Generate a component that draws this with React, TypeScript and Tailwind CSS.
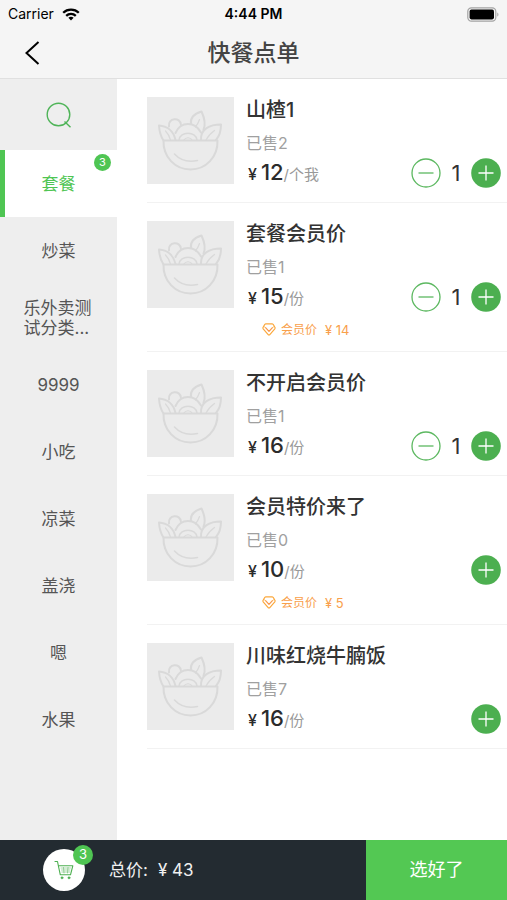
import { useState } from "react";

type Dish = {
  id: number;
  name: string;
  sold: number;
  price: number;
  unit: string;
  memberPrice?: number;
};

const categories = ["套餐", "炒菜", "乐外卖测试分类...", "9999", "小吃", "凉菜", "盖浇", "嗯", "水果"];

const dishes: Dish[] = [
  { id: 1, name: "山楂1", sold: 2, price: 12, unit: "个我" },
  { id: 2, name: "套餐会员价", sold: 1, price: 15, unit: "份", memberPrice: 14 },
  { id: 3, name: "不开启会员价", sold: 1, price: 16, unit: "份" },
  { id: 4, name: "会员特价来了", sold: 0, price: 10, unit: "份", memberPrice: 5 },
  { id: 5, name: "川味红烧牛腩饭", sold: 7, price: 16, unit: "份" },
];

function WifiIcon() {
  return (
    <svg viewBox="0 0 18 13" className="h-[13px] w-[18px]" fill="none" stroke="#000" strokeWidth="2.3" aria-hidden="true">
      <path d="M1.2 4.8C5.5 .6 12.5 .6 16.8 4.8" />
      <path d="M4.2 7.8C6.9 5.2 11.1 5.2 13.8 7.8" />
      <path d="M6.4 9.8C7.9 8.4 10.1 8.4 11.6 9.8L9 12.4Z" fill="#000" stroke="none" />
    </svg>
  );
}

function BatteryIcon() {
  return (
    <svg viewBox="0 0 32 15" className="h-[15px] w-8" fill="none" aria-hidden="true">
      <rect x=".8" y=".8" width="28" height="13.4" rx="3.6" stroke="#a3a3a3" strokeWidth="1.2" />
      <rect x="2.6" y="2.6" width="24.4" height="9.8" rx="1.8" fill="#000" />
      <path d="M30.3 5.4C31.8 6 31.8 9 30.3 9.6Z" fill="#a3a3a3" />
    </svg>
  );
}

function BowlPicture() {
  return (
    <svg viewBox="0 0 87 87" className="size-full" fill="none" stroke="#d9d9d9" strokeWidth="2" strokeLinecap="round" strokeLinejoin="round" aria-hidden="true">
      <path d="M16.500 43.500H70.500C71 60 59 72.500 43.500 72.500S16 60 16.500 43.500Z" />
      <path d="M27.500 57C33 63 41 65.500 50.500 63.500" strokeWidth="1.500" />
      <path d="M16.500 43.500C13.500 39 12.300 34 12 28.500C20 29 26.500 34 28.500 43" />
      <path d="M18.500 34C21 36.500 22.500 39.500 23.500 43" strokeWidth="1.200" />
      <path d="M22 29.500C20.500 20.500 33.500 19.500 34 28" />
      <path d="M28.500 36C31 30 35 27 41 27S51 30 54 35.500" />
      <path d="M32 43C33 34 49 34 50 43" strokeWidth="1.500" />
      <path d="M37 43C38.500 40 43.500 40 45 43" strokeWidth="1.200" />
      <path d="M44 27C43 20.500 48 16.500 54.500 14.500C57.500 21 59 27 56.500 32.500" />
      <path d="M52.500 22.500C51.500 25.500 50 28 48.500 30" strokeWidth="1.200" />
      <path d="M54 43C53.500 32 62.500 27.500 74 27.500C74 34 72.500 39 69 43" />
      <path d="M67.500 33.500C64 36 61 39 59 43" strokeWidth="1.200" />
    </svg>
  );
}

function GemIcon() {
  return (
    <svg viewBox="0 0 14 13" className="mb-0.5 h-[13px] w-[14px]" fill="none" stroke="#fba83c" strokeWidth="1.2" strokeLinejoin="round" strokeLinecap="round" aria-hidden="true">
      <path d="M4 .8H10Q10.800 .8 11.300 1.500L13 4.500Q13.200 5.200 12.800 5.800L7.600 11.800Q7 12.300 6.400 11.800L1.200 5.800Q.8 5.200 1 4.500L2.700 1.500Q3.200 .8 4 .8Z" />
      <path d="M3.800 4.800L7 8.300L10.200 4.800" stroke="#f9964b" />
      <path d="M2 3.600L3.800 4.800M12 3.600L10.200 4.800" strokeWidth=".7" />
    </svg>
  );
}

function CartIcon() {
  return (
    <svg viewBox="0 0 20 20" className="size-5" fill="none" stroke="#4caf50" strokeLinecap="round" strokeLinejoin="round" aria-hidden="true">
      <path d="M1 1.500H3.500L4.300 5.500L6.300 14.800H16.500L18.800 5.800H4.400" strokeWidth="1.100" />
      <path d="M7 8H16.500M7.500 10H16M7.800 12H15.800M9.500 7.500L10 13M14 7.500L13.500 13" strokeWidth=".5" />
      <circle cx="8" cy="17.800" r="1.100" fill="#4caf50" strokeWidth=".5" />
      <circle cx="15" cy="17.800" r="1.100" fill="#4caf50" strokeWidth=".5" />
    </svg>
  );
}

function DishRow({ dish, count, onChange }: { dish: Dish; count: number; onChange: (next: number) => void }) {
  return (
    <li
      className={
        dish.memberPrice !== undefined
          ? "flex border-b border-[#f2f2f2] pt-[18px] pr-1.5 pb-[11px]"
          : "flex border-b border-[#f2f2f2] pt-[18px] pr-1.5 pb-3.5"
      }
    >
      <div className="size-[87px] shrink-0 bg-[#ebebeb]">
        <BowlPicture />
      </div>
      <div className="ml-3 min-w-0 flex-1">
        <h2 className="truncate text-xl leading-[26px] font-medium text-[#333]">{dish.name}</h2>
        <p className="mt-2 text-base leading-6 text-[#a0a0a0]">已售{dish.sold}</p>
        <div className="mt-[3px] flex h-[30px] items-center justify-between">
          <p className="flex items-baseline pl-0.5 leading-7 text-[#2b2b2b]">
            <span className="text-base font-medium">¥</span>
            <span className="ml-1 text-[22px] font-medium">{dish.price}</span>
            <span className="text-[15px] text-[#999]">/{dish.unit}</span>
          </p>
          <div className="flex items-center">
            {count > 0 && (
              <>
                <button type="button" aria-label="减少" onClick={() => onChange(count - 1)} className="size-[30px]">
                  <svg viewBox="0 0 30 30" className="size-full" fill="none" stroke="#5cb860" strokeWidth="1.3" aria-hidden="true">
                    <circle cx="15" cy="15" r="14" />
                    <path d="M7.500 15H22.500" />
                  </svg>
                </button>
                <span className="w-[30px] text-center text-[22px] leading-[30px] text-[#333]">{count}</span>
              </>
            )}
            <button type="button" aria-label="增加" onClick={() => onChange(count + 1)} className="size-[30px]">
              <svg viewBox="0 0 30 30" className="size-full" fill="none" stroke="#fff" strokeWidth="1.3" aria-hidden="true">
                <circle cx="15" cy="15" r="14.800" fill="#4caf50" stroke="none" />
                <path d="M7.500 15H22.500M15 7.500V22.500" />
              </svg>
            </button>
          </div>
        </div>
        {dish.memberPrice !== undefined && (
          <p className="mt-2 flex items-center pl-4 text-xs leading-5 text-[#f9a04b]">
            <GemIcon />
            <span className="ml-[5px]">会员价</span>
            <span className="ml-2 text-[13px]">¥ {dish.memberPrice}</span>
          </p>
        )}
      </div>
    </li>
  );
}

export default function App() {
  const [active, setActive] = useState(0);
  const [counts, setCounts] = useState<Record<number, number>>({ 1: 1, 2: 1, 3: 1 });

  const quantity = dishes.reduce((sum, d) => sum + (counts[d.id] ?? 0), 0);
  const total = dishes.reduce((sum, d) => sum + (counts[d.id] ?? 0) * d.price, 0);

  return (
    <div className="flex h-dvh flex-col bg-white font-['Inter','Noto_Sans_CJK_SC',sans-serif]">
      <header className="border-b border-[#e0e0e0] bg-[#f5f5f5]">
        <div className="grid h-7 grid-cols-3 items-center px-2 text-sm text-black">
          <div className="flex items-center gap-2">
            <span>Carrier</span>
            <WifiIcon />
          </div>
          <time className="text-center font-semibold">4:44 PM</time>
          <div className="flex justify-end">
            <BatteryIcon />
          </div>
        </div>
        <div className="grid h-[50px] grid-cols-[64px_1fr_64px] items-center">
          <button type="button" aria-label="返回" className="flex h-full items-center pl-6">
            <svg viewBox="0 0 16 24" className="h-6 w-4" fill="none" stroke="#000" strokeWidth="2" aria-hidden="true">
              <path d="M14.500 1L2.500 12L14.500 23" />
            </svg>
          </button>
          <h1 className="text-center text-[23px] leading-8 font-medium text-[#444]">快餐点单</h1>
        </div>
      </header>

      <div className="flex min-h-0 flex-1">
        <nav aria-label="分类" className="w-[117px] shrink-0 overflow-y-auto bg-[#eee]">
          <button type="button" aria-label="搜索" className="flex h-[71px] w-full items-center justify-center">
            <svg viewBox="0 0 26 26" className="size-[26px]" fill="none" stroke="#4fb458" strokeWidth="1.4" aria-hidden="true">
              <circle cx="12.500" cy="12.500" r="11.300" />
              <path d="M18.500 19.500L24.500 25.300" />
            </svg>
          </button>
          {categories.map((name, i) => (
            <button
              key={name}
              type="button"
              onClick={() => setActive(i)}
              className={
                i === active
                  ? "relative flex h-[67px] w-full items-center justify-center border-l-[5px] border-[#4fc553] bg-white pr-[5px] text-[#4fc553]"
                  : "relative flex h-[67px] w-full items-center justify-center text-[#555]"
              }
            >
              <span className="max-w-[70px] text-left text-[17px] leading-5 break-all">{name}</span>
              {i === 0 && quantity > 0 && (
                <span className="absolute top-1 right-1.5 flex size-[17px] items-center justify-center rounded-full bg-[#4fc553] text-[11px] text-white">
                  {quantity}
                </span>
              )}
            </button>
          ))}
        </nav>
        <main className="min-w-0 flex-1 overflow-y-auto pl-[30px]">
          <ul>
            {dishes.map((d) => (
              <DishRow
                key={d.id}
                dish={d}
                count={counts[d.id] ?? 0}
                onChange={(next) => setCounts({ ...counts, [d.id]: next })}
              />
            ))}
          </ul>
        </main>
      </div>

      <footer className="flex h-[60px] shrink-0 bg-[#232b31]">
        <div className="flex flex-1 items-center pl-[43px]">
          <button type="button" aria-label="购物车" className="relative flex size-[42px] items-center justify-center rounded-full bg-white">
            <CartIcon />
            <span className="absolute -top-1 -right-2 flex size-5 items-center justify-center rounded-full bg-[#4fc553] text-[13px] text-white">
              {quantity}
            </span>
          </button>
          <p className="ml-6 text-[17px] leading-6 text-[#f0f0f0]">
            总价:<span className="ml-2.5">¥ {total}</span>
          </p>
        </div>
        <button type="button" className="w-[141px] bg-[#53c853] text-lg text-white">
          选好了
        </button>
      </footer>
    </div>
  );
}
